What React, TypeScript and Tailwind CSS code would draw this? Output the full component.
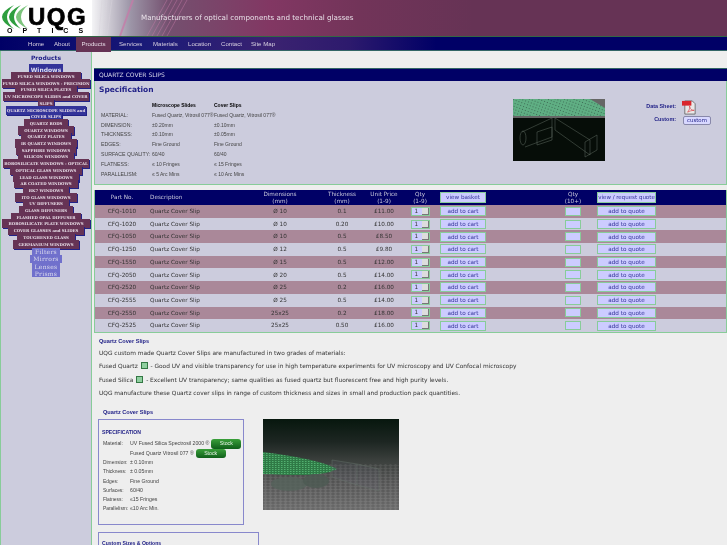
const navItems = [
  { label: "Home", w: "w-[14px] mr-[12px]" },
  { label: "About", w: "w-[15px] mr-[7px]" },
  { label: "Products", w: "w-[35px] mr-[8px]" },
  { label: "Services", w: "w-[21px] mr-[13px]" },
  { label: "Materials", w: "w-[23px] mr-[12px]" },
  { label: "Location", w: "w-[21px] mr-[12px]" },
  { label: "Contact", w: "w-[19px] mr-[11px]" },
  { label: "Site Map", w: "w-[22px]" },
];

const sideTop = [
  "FUSED SILICA WINDOWS",
  "FUSED SILICA WINDOWS - PRECISION",
  "FUSED SILICA PLATES",
  "UV MICROSCOPE SLIDES and COVER\nSLIPS",
  "QUARTZ MICROSCOPE SLIDES and\nCOVER SLIPS",
  "QUARTZ RODS",
  "QUARTZ WINDOWS",
  "QUARTZ PLATES",
  "IR QUARTZ WINDOWS",
  "SAPPHIRE WINDOWS",
  "SILICON WINDOWS",
  "BOROSILICATE WINDOWS - OPTICAL",
  "OPTICAL GLASS WINDOWS",
  "LEAD GLASS WINDOWS",
  "AR COATED WINDOWS",
  "BK7 WINDOWS",
  "ITO GLASS WINDOWS",
  "UV DIFFUSERS",
  "GLASS DIFFUSERS",
  "FLASHED OPAL DIFFUSER",
  "BOROSILICATE PLATE WINDOWS",
  "COVER GLASSES and SLIDES",
  "TOUGHENED GLASS",
  "GERMANIUM WINDOWS",
];

const specRows = [
  ["MATERIAL:", "Fused Quartz, Vitrosil 077®", "Fused Quartz, Vitrosil 077®"],
  ["DIMENSION:", "±0.20mm", "±0.10mm"],
  ["THICKNESS:", "±0.10mm", "±0.05mm"],
  ["EDGES:", "Fine Ground", "Fine Ground"],
  ["SURFACE QUALITY:", "60/40", "60/40"],
  ["FLATNESS:", "≤ 10 Fringes", "≤ 15 Fringes"],
  ["PARALLELISM:", "≤ 5 Arc Mins", "≤ 10 Arc Mins"],
];

const products = [
  ["CFQ-1010", "Ø 10", "0.1", "£11.00"],
  ["CFQ-1020", "Ø 10", "0.20", "£10.00"],
  ["CFQ-1050", "Ø 10", "0.5", "£8.50"],
  ["CFQ-1250", "Ø 12", "0.5", "£9.80"],
  ["CFQ-1550", "Ø 15", "0.5", "£12.00"],
  ["CFQ-2050", "Ø 20", "0.5", "£14.00"],
  ["CFQ-2520", "Ø 25", "0.2", "£16.00"],
  ["CFQ-2555", "Ø 25", "0.5", "£14.00"],
  ["CFQ-2550", "25x25", "0.2", "£18.00"],
  ["CFQ-2525", "25x25", "0.50", "£16.00"],
];

const lowerSpec = [
  ["Dimension:", "± 0.10mm"],
  ["Thickness:", "± 0.05mm"],
  ["Edges:", "Fine Ground"],
  ["Surfaces:", "60/40"],
  ["Flatness:", "≤15 Fringes"],
  ["Parallelism:", "≤10 Arc Min."],
];

const rowGrid = "grid grid-cols-[54px_91px_80px_44px_40px_32px_54px_60px_46px_61px_1fr] items-center";

function Logo() {
  return (
    <div className="relative w-[92px] h-[36px] bg-white shrink-0 overflow-hidden">
      <svg viewBox="0 0 32 30" className="absolute left-0 top-[2px] w-[32px] h-[30px]">
        <path d="M14 3 Q-10 15 14 27 Q0 15 14 3 Z" fill="#2e9e3e" />
        <path d="M21 3 Q-3 15 21 27 Q7 15 21 3 Z" fill="#2e9e3e" />
        <path d="M28 3 Q4 15 28 27 Q14 15 28 3 Z" fill="#7cc47c" />
      </svg>
      <div className="absolute left-[28px] top-[8px] text-[24px] leading-[18px] tracking-[1.5px] font-bold text-black [font-family:'Liberation_Sans',sans-serif] [-webkit-text-stroke:0.7px_black]">
        UQG
      </div>
      <div className="absolute left-[7px] top-[28px] text-[7px] leading-[6px] font-bold tracking-[10px] whitespace-nowrap text-black [font-family:'Liberation_Sans',sans-serif]">
        OPTICS
      </div>
    </div>
  );
}

function Header() {
  return (
    <header className="flex h-[37px] bg-[#663355] border-b border-[#336644]">
      <Logo />
      <div className="relative flex-1 h-[36px] bg-[linear-gradient(90deg,#f4f4f6_0,#9d96a8_6%,#74506f_12%,#823763_28%,#723459_42%,#663355_60%)] overflow-hidden">
        <svg viewBox="0 0 300 36" className="absolute left-0 top-0 w-[300px] h-[36px]" fill="none" stroke="#c77aa8" strokeWidth="0.6" opacity="0.75">
          <path d="M10 0 L7 36 M15 0 L11 36 M20 0 L15 36" stroke="#d8d4dc" />
          <path d="M41 0 L28 36" strokeWidth="2" />
          <path d="M75 0 L55 36 M80 0 L60 36 M85 0 L65 36 M90 0 L70 36 M95 0 L75 36" />
        </svg>
        <div className="absolute left-[49px] top-[12px] text-[7.15px] leading-[12px] text-[#e8e0e8] [font-family:'DejaVu_Sans',sans-serif] whitespace-nowrap">
          Manufacturers of optical components and technical glasses
        </div>
      </div>
    </header>
  );
}

function Nav() {
  return (
    <nav className="relative z-10 flex h-[14px] bg-[linear-gradient(90deg,#000066_0,#1a1a78_20%,#3a2270_38%,#2d1a6d_48%,#000066_60%)] border-b border-[#336666] pl-[28px] text-[6.1px] leading-[13px] text-[#d8d0e0] [font-family:'Liberation_Sans',sans-serif]">
      {navItems.map((item) => (
        <a
          key={item.label}
          className={
            item.label === "Products"
              ? `h-[15px] text-center whitespace-nowrap bg-[#663355] text-[#e6dce6] ${item.w}`
              : `text-center whitespace-nowrap ${item.w}`
          }
        >
          {item.label}
        </a>
      ))}
    </nav>
  );
}

function Sidebar() {
  return (
    <aside className="w-[92px] shrink-0 h-[495px] bg-[#ccccdd] border-l border-r border-[#88cc99] overflow-hidden text-center">
      <div className="pt-[3px] text-[6px] leading-[8px] font-bold text-[#222288] [font-family:'DejaVu_Sans',sans-serif]">Products</div>
      <div className="mt-[2px]">
        <div className="mx-auto w-[34px] h-[10px] bg-[#333399] text-[6px] leading-[12px] font-bold text-[#dde] [font-family:'DejaVu_Sans',sans-serif]">Windows</div>
        <div className="text-[3.9px] font-bold leading-[6.7px] whitespace-pre [font-family:'DejaVu_Serif',serif]">
          {sideTop.map((s) => (
            <div key={s}>
              <a
                className={`py-[2px] [box-decoration-break:clone] shadow-[1px_1px_0_#222288] text-[#e6dce6] ${
                  s.length >= 28 ? "px-[1px]" : "px-[6px]"
                } ${s.startsWith("QUARTZ MICRO") ? "bg-[#333399]" : "bg-[#663355]"}`}
              >
                {s}
              </a>
            </div>
          ))}
        </div>
        <div className="relative flex flex-col items-center text-[6px] leading-[7.2px] tracking-[0.3px] text-[#dde] [font-family:'DejaVu_Serif',serif]">
          {["Filters", "Mirrors", "Lenses", "Prisms"].map((s) => (
            <div key={s} className="bg-[#7070cc] px-[3px]">{s}</div>
          ))}
        </div>
      </div>
    </aside>
  );
}

function SpecPanel() {
  return (
    <section className="ml-[2px]">
      <div className="h-[13px] bg-[#000066] border-t border-[#336666] pl-[5px] text-[6px] leading-[12px] text-[#d8d8ea] [font-family:'DejaVu_Sans',sans-serif]">QUARTZ COVER SLIPS</div>
      <div className="flex h-[104px] bg-[#ccccdd] border-l border-r border-b border-[#88cc99] [font-family:'Liberation_Sans',sans-serif] text-[#444]">
        <div className="w-[418px] pl-[4px]">
          <div className="pt-[4px] text-[7.5px] leading-[10px] font-bold text-[#222288] [font-family:'DejaVu_Sans',sans-serif]">Specification</div>
          <div className="grid grid-cols-[51px_62px_1fr] pl-[2px] pt-[6px] leading-[9.8px] text-[5px]">
            <div />
            <div className="font-bold text-black">Microscope Slides</div>
            <div className="font-bold text-black">Cover Slips</div>
            {specRows.map((r) => (
              <div key={r[0]} className="contents">
                <div className="whitespace-nowrap text-[5.2px]">{r[0]}</div>
                <div className="whitespace-nowrap">{r[1]}</div>
                <div className="whitespace-nowrap">{r[2]}</div>
              </div>
            ))}
          </div>
        </div>
        <div className="w-[92px] h-[62px] mt-[18px] shrink-0 bg-[#060d08] overflow-hidden">
          <svg viewBox="0 0 92 62" className="w-[92px] h-[62px]" fill="none">
            <defs>
              <pattern id="hatch" width="3" height="3" patternUnits="userSpaceOnUse" patternTransform="rotate(20)">
                <rect width="3" height="3" fill="#5fae83" />
                <rect width="1" height="1" fill="#3e6e56" />
              </pattern>
            </defs>
            <rect width="92" height="19" fill="#666" />
            <path d="M0 0 H77 L92 9 V17 H0 Z" fill="url(#hatch)" />
            <path d="M9 33 L39 19 M12 48 L39 38 M24 33 L39 28 V41 L24 46 Z M42 19 L77 41 V56 L42 31 Z M72 43 L84 36 V51 L72 58 Z M39 19 V38" stroke="#5f6b61" strokeWidth="0.5" />
            <ellipse cx="10" cy="39" rx="3" ry="7" stroke="#5f6b61" strokeWidth="0.5" />
          </svg>
        </div>
        <div className="flex-1 relative text-[#222288] font-bold text-[5.4px] leading-[7px]">
          <div className="absolute right-[50px] top-[22px] whitespace-nowrap">Data Sheet:</div>
          <svg viewBox="0 0 16 16" className="absolute left-[77px] top-[19px] w-[15px] h-[15px]">
            <path d="M3 1 H11 L14 4 V15 H3 Z" fill="#e8e8e8" stroke="#555" strokeWidth="0.8" />
            <rect x="0" y="1" width="10" height="5" fill="#d9262c" />
            <path d="M6 13 C8 10 9 8 8 6.5 C8 10 11 11 13 11 C10 11 8 12 6 13 Z" fill="none" stroke="#d9262c" strokeWidth="0.6" />
          </svg>
          <div className="absolute right-[50px] top-[35px] whitespace-nowrap">Custom:</div>
          <div className="absolute left-[78px] top-[35px] w-[28px] h-[9px] rounded-[2px] bg-[#d8d8ff] border border-[#8888aa] text-center text-[5.4px] leading-[7px] font-normal [font-family:'DejaVu_Sans',sans-serif] text-[#222288]">custom</div>
        </div>
      </div>
    </section>
  );
}

function ProductTable() {
  return (
    <section className="ml-[2px] mt-[5px] border-l border-r border-b border-[#88cc99] [font-family:'DejaVu_Sans',sans-serif] text-[5.7px]">
      <div className={`${rowGrid} h-[15px] bg-[#000066] text-[#c8c8dc] leading-[6.5px] text-center`}>
        <div>Part No.</div>
        <div className="text-left pl-[1px]">Description</div>
        <div>Dimensions<br />(mm)</div>
        <div>Thickness<br />(mm)</div>
        <div>Unit Price<br />(1-9)</div>
        <div>Qty<br />(1-9)</div>
        <div className="flex justify-center"><div className="w-[46px] h-[11px] bg-[#ccccff] border border-[#88cc99] leading-[9px] text-[#333399]">view basket</div></div>
        <div />
        <div>Qty<br />(10+)</div>
        <div className="flex justify-center"><div className="w-[59px] h-[11px] bg-[#ccccff] border border-[#88cc99] leading-[9px] text-[5.5px] text-[#333399] whitespace-nowrap">view / request quote</div></div>
        <div />
      </div>
      {products.map((p, i) => (
        <div
          key={p[0]}
          className={`${rowGrid} h-[12.7px] text-center text-[#333] ${i % 2 === 0 ? "bg-[#aa8899]" : "bg-[#ccccdd]"}`}
        >
          <div>{p[0]}</div>
          <div className="text-left pl-[1px]">Quartz Cover Slip</div>
          <div>{p[1]}</div>
          <div>{p[2]}</div>
          <div>{p[3]}</div>
          <div className="flex justify-center">
            <div className="flex items-center w-[19px] h-[9px] bg-[#ccccff] border border-[#88cc99] pl-[3px]">
              <span className="flex-1 text-left leading-[7px]">1</span>
              <span className="w-[7px] h-[7px] bg-[#ddd] border-r border-b border-[#777]" />
            </div>
          </div>
          <div className="flex justify-center">
            <div className="w-[46px] h-[10px] bg-[#ccccff] border border-[#88cc99] leading-[8px] text-[#333399]">add to cart</div>
          </div>
          <div />
          <div className="flex justify-center">
            <div className="w-[16px] h-[9px] bg-[#ccccff] border border-[#88cc99]" />
          </div>
          <div className="flex justify-center">
            <div className="w-[59px] h-[10px] bg-[#ccccff] border border-[#88cc99] leading-[8px] text-[#333399]">add to quote</div>
          </div>
          <div />
        </div>
      ))}
    </section>
  );
}

function GreenMark() {
  return (
    <span className="inline-block align-[-1px] w-[7px] h-[7px] mx-[1px] bg-[#8fcf9f] border border-[#337744]" />
  );
}

function Copy() {
  return (
    <section className="pl-[7px] text-[5.86px] leading-[8px] text-[#333] [font-family:'DejaVu_Sans',sans-serif]">
      <div className="mt-[4px] font-bold text-[#222288] [font-family:'Liberation_Sans',sans-serif] text-[5.6px]">Quartz Cover Slips</div>
      <p className="mt-[4px]">UQG custom made Quartz Cover Slips are manufactured in two grades of materials:</p>
      <p className="mt-[5.5px]">Fused Quartz <GreenMark /> - Good UV and visible transparency for use in high temperature experiments for UV microscopy and UV Confocal microscopy</p>
      <p className="mt-[5.5px]">Fused Silica <GreenMark /> - Excellent UV transparency; same qualities as fused quartz but fluorescent free and high purity levels.</p>
      <p className="mt-[5.5px]">UQG manufacture these Quartz cover slips in range of custom thickness and sizes in small and production pack quantities.</p>
      <div className="mt-[11px] ml-[4px] font-bold text-[#222288] [font-family:'Liberation_Sans',sans-serif] text-[5.6px]">Quartz Cover Slips</div>
    </section>
  );
}

function StockButton() {
  return (
    <span className="inline-block ml-[0.5px] w-[30px] h-[9.5px] rounded-[3px] bg-[linear-gradient(#3aa03a,#0f5f1a)] text-center text-[5.2px] leading-[9.5px] text-[#e8f4e8]">Stock</span>
  );
}

function LowerPanel() {
  return (
    <section className="pl-[6px] mt-[3px] [font-family:'Liberation_Sans',sans-serif] text-[5.2px] text-[#444]">
      <div className="flex items-start">
        <div className="w-[146px] h-[106px] border border-[#8888cc] pl-[3px] pt-[9px]">
          <div className="text-[5.1px] font-bold text-[#222288] leading-[7px]">SPECIFICATION</div>
          <div className="grid grid-cols-[27px_1fr] leading-[9.1px] pl-[1px] pt-[3px]">
            <div>Material:</div>
            <div className="whitespace-nowrap">UV Fused Silica Spectrosil 2000 ® <StockButton /></div>
            <div />
            <div className="whitespace-nowrap">Fused Quartz Vitrosil 077 ® <StockButton /></div>
            {lowerSpec.map((r) => (
              <div key={r[0]} className="contents">
                <div className="whitespace-nowrap text-[4.9px]">{r[0]}</div>
                <div>{r[1]}</div>
              </div>
            ))}
          </div>
        </div>
        <div className="w-[136px] h-[91px] ml-[19px] bg-[linear-gradient(#07170e,#1d2622_25%,#3a3f3c_45%,#555_70%,#6a6a6a)] overflow-hidden">
          <svg viewBox="0 0 136 91" className="w-[136px] h-[91px]" fill="none">
            <defs>
              <pattern id="floor" width="5" height="3" patternUnits="userSpaceOnUse">
                <path d="M0 1.5 L2.5 0 L5 1.5 L2.5 3 Z" fill="#808080" />
              </pattern>
              <pattern id="greenDots" width="3" height="2" patternUnits="userSpaceOnUse">
                <rect width="3" height="2" fill="#2f7a46" />
                <rect width="1.5" height="1" fill="#52b070" />
              </pattern>
              <linearGradient id="floorFade" x1="0" y1="0" x2="0" y2="1">
                <stop offset="0" stopColor="#fff" stopOpacity="0.25" />
                <stop offset="1" stopColor="#fff" stopOpacity="0.7" />
              </linearGradient>
              <mask id="fadeMask">
                <rect y="45" width="136" height="46" fill="url(#floorFade)" />
              </mask>
            </defs>
            <rect y="45" width="136" height="46" fill="url(#floor)" mask="url(#fadeMask)" />
            <path d="M0 33 C30 37 60 42 74 50 C60 58 30 56 0 55 Z" fill="url(#greenDots)" />
            <path d="M69 41 L94 45 V66 L69 58 Z M94 45 L116 50 V72 L94 66" stroke="#6b7a70" strokeWidth="0.4" fill="#667" fillOpacity="0.15" />
            <ellipse cx="26" cy="65" rx="18" ry="7" fill="#55635b" fillOpacity="0.8" />
            <ellipse cx="53" cy="62" rx="13" ry="7" fill="#4c5a52" fillOpacity="0.8" />
          </svg>
        </div>
      </div>
      <div className="mt-[7px] w-[161px] h-[40px] border border-[#8888cc] pl-[3px] pt-[7px] text-[5.1px] font-bold text-[#222288] leading-[7px]">Custom Sizes &amp; Options</div>
    </section>
  );
}

export default function App() {
  return (
    <div className="w-[727px] h-[545px] overflow-hidden bg-[#eeeeee] blur-[0.35px]">
      <Header />
      <Nav />
      <div className="flex">
        <Sidebar />
        <main className="flex-1 min-w-0 pt-[17px]">
          <SpecPanel />
          <ProductTable />
          <Copy />
          <LowerPanel />
        </main>
      </div>
    </div>
  );
}
